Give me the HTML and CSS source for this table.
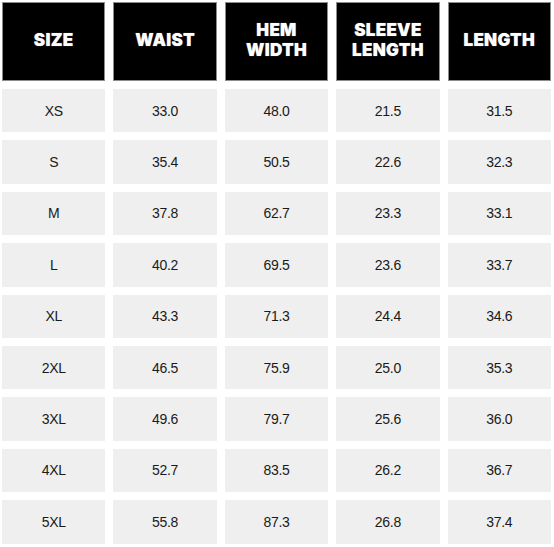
FILE: index.html
```html
<!DOCTYPE html>
<html>
<head>
<meta charset="utf-8">
<link rel="stylesheet" href="styles.css">
</head>
<body>
<div class="chart">
  <div class="cell head">SIZE</div>
  <div class="cell head">WAIST</div>
  <div class="cell head">HEM<br>WIDTH</div>
  <div class="cell head">SLEEVE<br>LENGTH</div>
  <div class="cell head">LENGTH</div>

  <div class="cell">XS</div><div class="cell">33.0</div><div class="cell">48.0</div><div class="cell">21.5</div><div class="cell">31.5</div>
  <div class="cell">S</div><div class="cell">35.4</div><div class="cell">50.5</div><div class="cell">22.6</div><div class="cell">32.3</div>
  <div class="cell">M</div><div class="cell">37.8</div><div class="cell">62.7</div><div class="cell">23.3</div><div class="cell">33.1</div>
  <div class="cell">L</div><div class="cell">40.2</div><div class="cell">69.5</div><div class="cell">23.6</div><div class="cell">33.7</div>
  <div class="cell">XL</div><div class="cell">43.3</div><div class="cell">71.3</div><div class="cell">24.4</div><div class="cell">34.6</div>
  <div class="cell">2XL</div><div class="cell">46.5</div><div class="cell">75.9</div><div class="cell">25.0</div><div class="cell">35.3</div>
  <div class="cell">3XL</div><div class="cell">49.6</div><div class="cell">79.7</div><div class="cell">25.6</div><div class="cell">36.0</div>
  <div class="cell">4XL</div><div class="cell">52.7</div><div class="cell">83.5</div><div class="cell">26.2</div><div class="cell">36.7</div>
  <div class="cell">5XL</div><div class="cell">55.8</div><div class="cell">87.3</div><div class="cell">26.8</div><div class="cell">37.4</div>
</div>
</body>
</html>
```

FILE: styles.css
```css
html, body {
  margin: 0;
  padding: 0;
  background: #ffffff;
}

.chart {
  box-sizing: border-box;
  width: 554px;
  padding: 2px 3px 0 2px;
  display: grid;
  grid-template-columns: repeat(5, 1fr);
  grid-template-rows: 79px repeat(9, 43.4px);
  column-gap: 8px;
  row-gap: 8px;
}

.cell {
  display: flex;
  align-items: center;
  justify-content: center;
  text-align: center;
  background: #efefef;
  color: #1a1a1a;
  font-family: "Liberation Sans", Arial, sans-serif;
  font-size: 14px;
  letter-spacing: -0.3px;
}

.head {
  box-sizing: border-box;
  padding-bottom: 4px;
  background: #000000;
  border: 1px solid #8c8c8c;
  color: #ffffff;
  font-family: Inter, "DejaVu Sans", sans-serif;
  font-weight: 900;
  font-size: 17px;
  line-height: 20px;
  letter-spacing: 0.3px;
  text-shadow: 0 0 1px rgba(255, 255, 255, 0.6);
}
```
